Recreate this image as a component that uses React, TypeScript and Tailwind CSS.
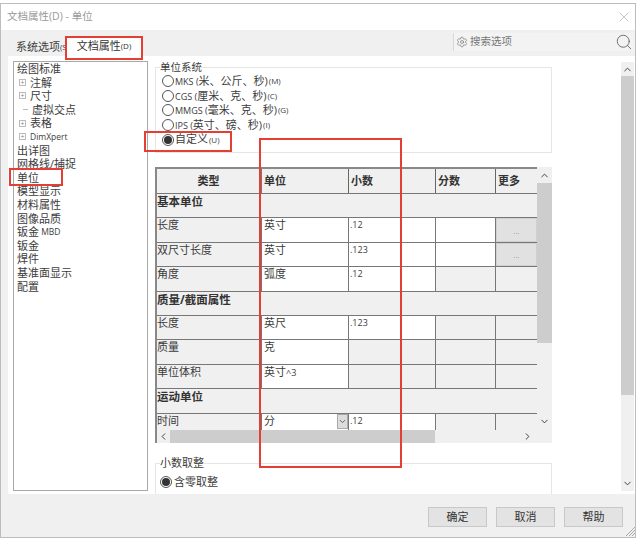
import { ChevronDown, ChevronLeft, ChevronRight, ChevronUp, Search, Settings, X } from "lucide-react";

interface TreeItem {
  label: string;
  kind?: "plus" | "line";
  small?: string;
}

interface RowItem {
  type: string;
  unit?: string;
  sup?: string;
  dec?: string;
  frac?: boolean;
  more?: boolean;
  decGray?: boolean;
  heading?: boolean;
  select?: boolean;
}

const tree: TreeItem[] = [
  { label: "绘图标准" },
  { label: "注解", kind: "plus" },
  { label: "尺寸", kind: "plus" },
  { label: "虚拟交点", kind: "line" },
  { label: "表格", kind: "plus" },
  { label: "", small: "DimXpert", kind: "plus" },
  { label: "出详图" },
  { label: "网格线/捕捉" },
  { label: "单位" },
  { label: "模型显示" },
  { label: "材料属性" },
  { label: "图像品质" },
  { label: "钣金", small: " MBD" },
  { label: "钣金" },
  { label: "焊件" },
  { label: "基准面显示" },
  { label: "配置" },
];

const radios = [
  { pre: "MKS (", label: "米、公斤、秒)", key: "(M)" },
  { pre: "CGS (", label: "厘米、克、秒)", key: "(C)" },
  { pre: "MMGS (", label: "毫米、克、秒)", key: "(G)" },
  { pre: "IPS (", label: "英寸、磅、秒)", key: "(I)" },
  { pre: "", label: "自定义", key: "(U)", on: true },
];

const rows: RowItem[] = [
  { type: "基本单位", heading: true },
  { type: "长度", unit: "英寸", dec: ".12", frac: true, more: true },
  { type: "双尺寸长度", unit: "英寸", dec: ".123", frac: true, more: true },
  { type: "角度", unit: "弧度", dec: ".12" },
  { type: "质量/截面属性", heading: true },
  { type: "长度", unit: "英尺", dec: ".123" },
  { type: "质量", unit: "克", decGray: true },
  { type: "单位体积", unit: "英寸", sup: "^3", decGray: true },
  { type: "运动单位", heading: true },
  { type: "时间", unit: "分", dec: ".12", select: true },
];

const Radio = ({ on }: { on?: boolean }) => (
  <span className="flex h-[12px] w-[12px] shrink-0 items-center justify-center rounded-full border border-[#555] bg-white">
    {on && <span className="h-[8px] w-[8px] rounded-full bg-[#333]"></span>}
  </span>
);

const App = () => {
  return (
    <div className="relative h-[540px] w-[640px] overflow-hidden bg-white pt-[3px] font-['Open_Sans','Noto_Sans_CJK_SC',sans-serif] text-[11px] text-[#3c3c3c]">
      <div className="flex h-[535px] w-[636px] flex-col border border-[#bdbdbd] bg-[#f0f0f0]">
        <div className="flex h-[26px] items-center justify-between bg-white pl-[6px] pr-[3px] text-[10.5px] text-[#999]">
          <span>文档属性(D) - 单位</span>
          <X className="h-[16px] w-[16px] text-[#aaa]" strokeWidth={1} />
        </div>

        <div className="flex h-[26px]">
          <div className="flex items-end pl-[11px]">
            <div className="flex h-[19px] w-[55px] items-center whitespace-nowrap pl-[4px] text-[11px] leading-none">
              系统选项<span className="text-[8px]">(S)</span>
            </div>
            <div className="flex h-[20px] w-[74px] items-center justify-center whitespace-nowrap bg-white text-[11px] text-[#333]">
              文档属性<span className="text-[8px]">(D)</span>
            </div>
          </div>
          <div className="ml-auto mt-[3px] flex h-[18px] w-[182px] items-center border-l border-[#d8d8d8] bg-[#f3f3f3] pl-[2px] text-[#777]">
            <Settings className="h-[12px] w-[12px]" strokeWidth={1.4} />
            <span className="ml-[2px] text-[10.5px]">搜索选项</span>
            <Search className="ml-auto mr-[2px] h-[18px] w-[18px] text-[#666]" strokeWidth={1.2} />
          </div>
        </div>

        <div className="ml-[7px] flex h-[438px] bg-white">
          <div className="ml-[5px] mt-[5px] h-[430px] w-[135px] shrink-0 border border-[#a9a9a9] pl-[3px] text-[11px] leading-[13.6px]">
            {tree.map((item, i) => (
              <div key={i} className="flex h-[13.6px] items-center whitespace-pre">
                {item.kind === "plus" && (
                  <span className="ml-[2px] mr-[4px] flex h-[7px] w-[7px] items-center justify-center border border-[#bbb] text-[7px] leading-none text-[#888]">
                    +
                  </span>
                )}
                {item.kind === "line" && <span className="ml-[6px] mr-[4px] h-px w-[5px] bg-[#bbb]"></span>}
                <span>{item.label}</span>
                {item.small && <span className="text-[8.5px]">{item.small}</span>}
              </div>
            ))}
          </div>

          <div className="ml-[7px] w-[397px] shrink-0 overflow-hidden pt-[4px]">
            <fieldset className="h-[93px] border border-[#e6e6e6] pl-[6px]">
              <legend className="ml-[-2px] text-[10.5px] leading-[14px]">单位系统</legend>
              <div className="flex flex-col">
                {radios.map((r) => (
                  <div key={r.key} className="flex h-[14.6px] items-center gap-[1px] whitespace-pre text-[11px]">
                    <Radio on={r.on} />
                    <span>
                      <span className="text-[9px]">{r.pre}</span>
                      {r.label}
                    </span>
                    <span className="text-[8px]">{r.key}</span>
                  </div>
                ))}
              </div>
            </fieldset>

            <div className="mt-[14px] flex h-[276px] bg-[#f0f0f0]">
              <div className="flex w-[382px] flex-col">
                <div className="h-[263px] overflow-hidden border-l-2 border-[#888]">
                  <div className="flex h-[26px] border-t-2 border-[#888] text-[11px] font-bold text-[#333]">
                    <div className="flex w-[105px] items-center justify-center border-r-2 border-[#777]">类型</div>
                    <div className="flex w-[87px] items-center border-r border-[#666] pl-[2px]">单位</div>
                    <div className="flex w-[87px] items-center border-r border-[#666] pl-[2px]">小数</div>
                    <div className="flex w-[60px] items-center border-r border-[#666] pl-[2px]">分数</div>
                    <div className="flex w-[41px] items-center pl-[2px]">更多</div>
                  </div>
                  {rows.map((row, i) =>
                    row.heading ? (
                      <div key={i} className="h-[24.4px] border-t border-[#777] text-[11.5px] font-bold leading-[15px] text-[#333]">
                        {row.type}
                      </div>
                    ) : (
                      <div key={i} className="flex h-[24.4px] border-t border-[#777] leading-[13px]">
                        <div className="w-[105px] border-r-2 border-[#777]">{row.type}</div>
                        <div className="relative w-[87px] border-r border-[#777] bg-white pl-[2px]">
                          {row.unit}
                          {row.sup && <span className="text-[9px]">{row.sup}</span>}
                          {row.select && (
                            <span className="absolute right-0 top-0 flex h-[15px] w-[11px] items-center justify-center border border-[#aaa] bg-[#ddd]">
                              <ChevronDown className="h-[9px] w-[9px]" />
                            </span>
                          )}
                        </div>
                        <div className={`w-[87px] border-r border-[#777] pl-[1px] text-[9px] ${row.decGray ? "" : "bg-white"}`}>{row.dec}</div>
                        <div className={`w-[60px] border-r border-[#777] ${row.frac ? "bg-white" : ""}`}></div>
                        <div className="flex w-[41px] items-center justify-center">
                          {row.more && (
                            <span className="flex h-full w-full items-center justify-center border border-[#d0d0d0] bg-[#e1e1e1] text-[8px] text-[#999]">
                              ...
                            </span>
                          )}
                        </div>
                      </div>
                    ),
                  )}
                </div>
                <div className="flex h-[13px] items-center border-l-2 border-[#888]">
                  <span className="flex w-[13px] shrink-0 justify-center text-[#333]">
                    <ChevronLeft className="h-[11px] w-[11px]" strokeWidth={2} />
                  </span>
                  <span className="h-full w-[265px] shrink-0 bg-[#cdcdcd]"></span>
                  <span className="ml-auto mr-[4px] flex text-[#333]">
                    <ChevronRight className="h-[11px] w-[11px]" strokeWidth={2} />
                  </span>
                </div>
              </div>
              <div className="flex h-[263px] w-[15px] flex-col items-center text-[#333]">
                <span className="flex h-[16px] items-center">
                  <ChevronUp className="h-[11px] w-[11px]" strokeWidth={2} />
                </span>
                <span className="h-[160px] w-full bg-[#cdcdcd]"></span>
                <span className="mb-[3px] mt-auto flex">
                  <ChevronDown className="h-[11px] w-[11px]" strokeWidth={2} />
                </span>
              </div>
            </div>

            <fieldset className="mt-[13px] h-[60px] border border-[#e6e6e6] pl-[4px]">
              <legend className="text-[11px] leading-[14px]">小数取整</legend>
              <div className="mt-[5px] flex items-center gap-[2px] text-[11px] leading-[14px]">
                <Radio on />
                <span>含零取整</span>
              </div>
            </fieldset>
          </div>

          <div className="ml-[69px] mt-[6px] flex h-[429px] w-[13px] flex-col items-center bg-[#f0f0f0] text-[#333]">
            <span className="flex h-[14px] items-center">
              <ChevronUp className="h-[11px] w-[11px]" strokeWidth={2} />
            </span>
            <span className="h-[319px] w-full bg-[#cdcdcd]"></span>
            <span className="mb-[2px] mt-auto flex">
              <ChevronDown className="h-[11px] w-[11px]" strokeWidth={2} />
            </span>
          </div>
        </div>

        <div className="flex flex-1 items-start justify-end gap-[9px] pr-[12px] pt-[13px]">
          {["确定", "取消", "帮助"].map((b) => (
            <button key={b} className="flex h-[20px] w-[59px] items-center justify-center border border-[#c8c8c8] bg-[#e3e3e3] text-[11px] text-[#333]">
              {b}
            </button>
          ))}
        </div>
      </div>

      <svg className="absolute bottom-[3px] left-[624px] h-[12px] w-[12px]" viewBox="0 0 12 12" stroke="#aaa" fill="none">
        <path d="M11 2 2 11M11 5 5 11M11 8 8 11" />
      </svg>

      <div className="absolute left-[65px] top-[36px] h-[24px] w-[78px] border-2 border-[#e53e34]"></div>
      <div className="absolute left-[9px] top-[168px] h-[18px] w-[54px] border-2 border-[#e53e34]"></div>
      <div className="absolute left-[144px] top-[131px] h-[21px] w-[88px] border-2 border-[#e53e34]"></div>
      <div className="absolute left-[259px] top-[138px] h-[330px] w-[143px] border-2 border-[#e53e34]"></div>
    </div>
  );
};

export default App;
